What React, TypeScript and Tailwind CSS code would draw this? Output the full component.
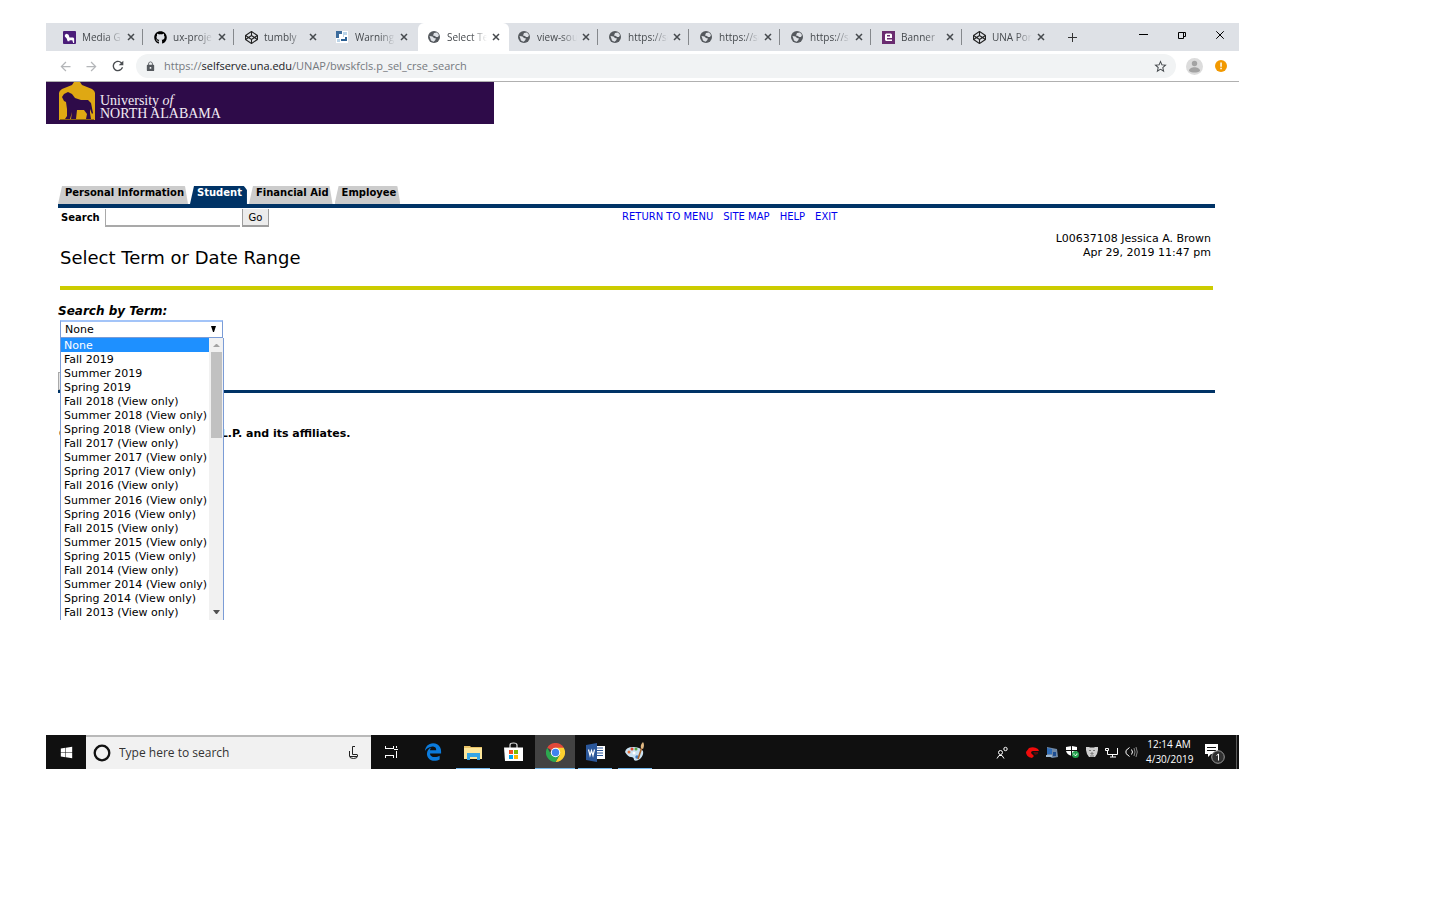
import React, { useState } from 'react';
import { FaGithub, FaGlobeAmericas, FaCodepen, FaEdgeLegacy, FaWindows } from 'react-icons/fa';
import { MdArrowBack, MdArrowForward, MdRefresh, MdLock, MdStarBorder } from 'react-icons/md';

const UI = "font-['Open_Sans','Noto_Sans',sans-serif]";
const VERDANA = "font-['DejaVu_Sans',sans-serif]";

const LION =
  'M3 15L5 12 9 10 13 12 16 16 22 18 29 18 32 21 34 31 33 32 31 27V31L32 37H27L28 32 25 28 18 28 17 37H12L13 30 11 37H6L8 34V27L7 20 5 19z';

function LionMark({ className }: { className: string }) {
  return (
    <svg className={className} viewBox="0 0 14 14" aria-hidden="true">
      <rect width="14" height="14" rx="1" fill="#4b1d79" />
      <path d="M2 4l2-1 2 1 1 3h4l1 1v5h-1l-1-3H7v1H5L4 8 2 6z" fill="#fff" />
    </svg>
  );
}

function TilesMark() {
  return (
    <svg className="size-3" viewBox="0 0 12 12" aria-hidden="true">
      <rect width="12" height="12" fill="#fff" />
      <path d="M0 0h6v3H3v4H0z" fill="#3b6b9c" />
      <path d="M7 1h4v3H8v2H7zM1 8h3v3H1z" fill="#b9d3e8" />
      <path d="M5 8h4v2H5zM9 6h2v4H9z" fill="#2a5f93" />
    </svg>
  );
}

function BannerMark() {
  return (
    <svg className="size-[13px]" viewBox="0 0 13 13" aria-hidden="true">
      <rect width="13" height="13" fill="#6a2c70" />
      <path d="M4 2.500h5l1 1V7H5v1.500h5V10H4L3 9V3.500z" fill="#fff" />
      <path d="M5 4h3v1.500H5z" fill="#6a2c70" />
    </svg>
  );
}

type Kind = 'lion' | 'github' | 'codepen' | 'tiles' | 'globe' | 'banner';
const browserTabs: { kind: Kind; title: string; line?: boolean; active?: boolean }[] = [
  { kind: 'lion', title: 'Media G', line: true },
  { kind: 'github', title: 'ux-proje', line: true },
  { kind: 'codepen', title: 'tumbly' },
  { kind: 'tiles', title: 'Warning' },
  { kind: 'globe', title: 'Select Te', active: true },
  { kind: 'globe', title: 'view-sou', line: true },
  { kind: 'globe', title: 'https://se', line: true },
  { kind: 'globe', title: 'https://se', line: true },
  { kind: 'globe', title: 'https://se', line: true },
  { kind: 'banner', title: 'Banner', line: true },
  { kind: 'codepen', title: 'UNA Por' },
];

function TabIcon({ kind }: { kind: Kind }) {
  if (kind === 'lion') return <LionMark className="size-[13px]" />;
  if (kind === 'github') return <FaGithub className="size-[13px] text-black" />;
  if (kind === 'codepen') return <FaCodepen className="size-[13px] text-[#222]" />;
  if (kind === 'tiles') return <TilesMark />;
  if (kind === 'banner') return <BannerMark />;
  return (
    <svg className="size-3" viewBox="0 0 12 12" aria-hidden="true">
      <circle cx="6" cy="6" r="6" fill="#55595e" />
      <path d="M6 2l3-.5L11 4 10 6H8L7 5 5 4.500zM1.500 5l3 .5 1.500 1.500 2 .5-1 2-1.500 1.300L3 9.500z" fill="#dee1e6" />
    </svg>
  );
}

function Cross({ className }: { className: string }) {
  return (
    <svg className={className} viewBox="0 0 8 8" fill="none" stroke="currentColor" aria-hidden="true">
      <path d="M1 1l6 6M7 1L1 7" />
    </svg>
  );
}

function BrowserChrome() {
  return (
    <div className={UI}>
      <div className="flex h-7 items-stretch bg-[#dee1e6] pl-2 text-[#45494d]">
        {browserTabs.map((t, i) => (
          <div
            key={i}
            className={
              t.active
                ? 'flex w-[91px] items-center rounded-t-md bg-white pr-[6px] pl-[10px]'
                : 'flex w-[91px] items-center py-1 pr-[2px] pl-[9px]'
            }
          >
            <span className="flex w-[19px] shrink-0 items-center">
              <TabIcon kind={t.kind} />
            </span>
            <span className="w-10 overflow-hidden text-[10px] whitespace-nowrap [mask-image:linear-gradient(to_right,#000_60%,transparent)]">
              {t.title}
            </span>
            <button type="button" aria-label="Close tab" className="ml-[5px] text-[#45494d]">
              <Cross className="size-2 stroke-[1.5]" />
            </button>
            {t.line && <span className="ml-auto h-4 w-px bg-[#85888c]" />}
          </div>
        ))}
        <button type="button" aria-label="New tab" className="ml-[13px] flex items-center">
          <svg className="size-[9px]" viewBox="0 0 9 9" stroke="#333" aria-hidden="true">
            <path d="M4.500 0v9M0 4.500h9" />
          </svg>
        </button>
        <div className="mr-[14px] ml-auto flex items-center gap-[29px] pb-1 text-black">
          <button type="button" aria-label="Minimize">
            <svg className="size-[10px]" viewBox="0 0 10 10" stroke="currentColor" aria-hidden="true">
              <path d="M1 4.500h9" />
            </svg>
          </button>
          <button type="button" aria-label="Restore">
            <svg className="size-[9px]" viewBox="0 0 9 9" fill="none" stroke="currentColor" aria-hidden="true">
              <path d="M1.500 1.500h5v6h-5zM2.500 1.500h6v4H7" />
            </svg>
          </button>
          <button type="button" aria-label="Close window">
            <Cross className="size-[10px] stroke-[0.8]" />
          </button>
        </div>
      </div>
      <div className="flex h-[31px] items-center border-b border-[#b0b0b0] bg-white pr-3 pl-3">
        <button type="button" aria-label="Back" className="w-[26px]">
          <MdArrowBack className="size-[15px] text-[#b4b6b9]" />
        </button>
        <button type="button" aria-label="Forward" className="w-[26px]">
          <MdArrowForward className="size-[15px] text-[#b4b6b9]" />
        </button>
        <button type="button" aria-label="Reload" className="w-[26px]">
          <MdRefresh className="size-[16px] text-[#4a4d51]" />
        </button>
        <div className="flex h-6 flex-1 items-center rounded-full bg-[#f1f3f4] pr-2 pl-[9px]">
          <MdLock className="size-[11px] text-[#55595e]" />
          <span className="ml-2 flex-1 text-[11px] text-[#75797e]">
            https://<span className="text-[#202124]">selfserve.una.edu</span>/UNAP/bwskfcls.p_sel_crse_search
          </span>
          <button type="button" aria-label="Bookmark">
            <MdStarBorder className="size-[15px] text-[#45494d]" />
          </button>
        </div>
        <button type="button" aria-label="Profile" className="ml-[10px]">
          <svg className="size-[17px]" viewBox="0 0 17 17" aria-hidden="true">
            <circle cx="8.500" cy="8.500" r="8.500" fill="#dcdcdc" />
            <circle cx="8.500" cy="5.500" r="2.700" fill="#a3a3a3" />
            <path d="M3 13c0-5 11-5 11 0-3 2-8 2-11 0z" fill="#a3a3a3" />
          </svg>
        </button>
        <button type="button" aria-label="Update" className="ml-3">
          <svg className="size-3" viewBox="0 0 12 12" aria-hidden="true">
            <circle cx="6" cy="6" r="6" fill="#f29900" />
            <path d="M5.300 2.500h1.500v4.300H5.300zM5.300 7.800h1.500v1.500H5.300z" fill="#fff" />
          </svg>
        </button>
      </div>
    </div>
  );
}

const sections = ['Personal Information', 'Student', 'Financial Aid', 'Employee'];

const viewOnly = ['2018', '2017', '2016', '2015', '2014'].flatMap((y) => [
  `Fall ${y} (View only)`,
  `Summer ${y} (View only)`,
  `Spring ${y} (View only)`,
]);
const terms = ['None', 'Fall 2019', 'Summer 2019', 'Spring 2019', ...viewOnly, 'Fall 2013 (View only)'];

function TermPicker() {
  const [term, setTerm] = useState('None');
  return (
    <div className="relative ml-[2px] w-[164px]">
      <select
        id="term"
        value={term}
        onChange={(e) => setTerm(e.target.value)}
        className="block h-[18px] w-[163px] appearance-none border border-t-2 border-[#7b9cd6] border-t-[#a3c4f8] bg-white pl-1 text-[11px] leading-none"
      >
        {terms.map((t) => (
          <option key={t}>{t}</option>
        ))}
      </select>
      <svg className="pointer-events-none absolute top-[6px] right-2 h-[6px] w-[5px]" viewBox="0 0 5 6" aria-hidden="true">
        <path d="M0 0h5L3 6H2z" />
      </svg>
      <div className="absolute top-[18px] left-0 z-10 flex h-[282px] w-[164px] border-x border-[#7b9cd6] bg-white">
        <ul role="listbox" aria-label="Terms" className="flex w-[148px] flex-col">
          {terms.map((t) => (
            <li
              key={t}
              role="option"
              aria-selected={t === term}
              onClick={() => setTerm(t)}
              className={
                t === term
                  ? 'flex flex-1 items-center bg-[#1e90ff] pl-[3px] text-[11px] leading-none whitespace-nowrap text-white'
                  : 'flex flex-1 items-center pl-[3px] text-[11px] leading-none whitespace-nowrap'
              }
            >
              {t}
            </li>
          ))}
        </ul>
        <div className="flex flex-1 flex-col items-center bg-[#f1f1f1]">
          <svg className="mt-[6px] h-[3px] w-[7px]" viewBox="0 0 7 3" aria-hidden="true">
            <path d="M0 3L3 0h1l3 3z" fill="#a3a3a3" />
          </svg>
          <div className="mt-[5px] h-[86px] w-[11px] bg-[#c1c1c1]" />
          <svg className="mt-auto mb-[6px] h-1 w-[7px]" viewBox="0 0 7 4" aria-hidden="true">
            <path d="M0 0h7L4 4H3z" fill="#505050" />
          </svg>
        </div>
      </div>
    </div>
  );
}

function Page() {
  return (
    <main className={`${VERDANA} min-h-[653px] text-[11px] leading-[14px] text-black`}>
      <header className="flex h-[42px] w-[448px] items-start bg-[#2e0b49] pl-[13px]">
        <svg className="h-[38px] w-9" viewBox="0 0 36 38" aria-hidden="true">
          <path d="M0 38V11q0-2 3-4l10-4 2-3h6l2 3 10 4q3 2 3 4v27z" fill="#dfa813" />
          <path d={LION} fill="#2e0b49" />
          <path d="M1 37.500h34" stroke="#8a6114" fill="none" />
        </svg>
        <p className="mt-3 ml-[5px] font-['Liberation_Serif',serif] text-[14px] leading-[13px] text-[#f2ecf5]">
          University <i>of</i>
          <br />
          NORTH ALABAMA
        </p>
      </header>

      <div className="mr-6 ml-3 pt-[62px]">
        <nav className="flex h-[22px] items-start gap-[2px] border-b-4 border-[#003366]">
          {sections.map((s) => (
            <a
              key={s}
              href="#section"
              className={
                s === 'Student'
                  ? "relative flex h-[18px] items-start pr-[5px] pl-[7px] text-[10px] font-bold text-white before:absolute before:inset-0 before:rounded-t-sm before:bg-[#003366] before:[clip-path:polygon(4px_0,calc(100%-3px)_0,100%_4px,100%_100%,0_100%)]"
                  : "relative flex h-[18px] items-start pr-[4px] pl-[7px] text-[10px] font-bold text-black before:absolute before:inset-0 before:rounded-t-sm before:bg-[#cccccc] before:[clip-path:polygon(4px_0,calc(100%-3px)_0,100%_100%,0_100%)]"
              }
            >
              <span className="relative leading-[13px]">{s}</span>
            </a>
          ))}
        </nav>

        <div className="flex h-5 items-start pl-[3px]">
          <form className="flex w-[561px] items-center pt-px" onSubmit={(e) => e.preventDefault()}>
            <label htmlFor="search" className="w-11 text-[10px] font-bold">
              Search
            </label>
            <input id="search" className="h-[18px] w-[135px] border-b-2 border-l border-[#a9a9a9] px-1 outline-none" />
            <button
              type="submit"
              className="ml-[2px] h-[18px] w-[27px] border-r border-b-2 border-l border-[#9d9d9d] bg-[#ececec] pt-[2px] text-[10px] leading-none"
            >
              Go
            </button>
          </form>
          <div className="flex gap-[10px] pt-[2px] text-[10px] text-[#0000ee]">
            <a href="#menu">RETURN TO MENU</a>
            <a href="#map">SITE MAP</a>
            <a href="#help">HELP</a>
            <a href="#exit">EXIT</a>
          </div>
        </div>

        <div className="mr-[2px] ml-[2px] flex h-[62px] items-start justify-between border-b-4 border-[#cccc00]">
          <h1 className="pt-[18px] text-[18px] leading-6">Select Term or Date Range</h1>
          <p className="mr-[2px] pt-1 text-right">
            L00637108 Jessica A. Brown
            <br />
            Apr 29, 2019 11:47 pm
          </p>
        </div>

        <label htmlFor="term" className="mt-[14px] mb-[2px] block text-[12px] font-bold italic">
          Search by Term:
        </label>
        <TermPicker />
        <button type="button" className="mt-[34px] block h-[18px] w-12 border border-[#a9a9a9] bg-[#e4e4e4] text-[10px] leading-none">
          Submit
        </button>
        <footer className="border-t-[3px] border-[#003366] pt-[34px] text-[11px] font-bold">
          © 2019 Ellucian Company L.P. and its affiliates.
        </footer>
      </div>
    </main>
  );
}

function TaskApp({ label, running, active, children }: { label: string; running?: boolean; active?: boolean; children: React.ReactNode }) {
  return (
    <button
      type="button"
      aria-label={label}
      className={active ? 'relative flex w-10 items-center justify-center bg-[#434343]' : 'relative flex w-10 items-center justify-center'}
    >
      {children}
      {running && <span className={active ? 'absolute inset-x-0 bottom-0 h-px bg-[#76b9ed]' : 'absolute inset-x-[3px] bottom-0 h-px bg-[#76b9ed]'} />}
    </button>
  );
}

function Taskbar() {
  return (
    <footer className={`${UI} flex h-[34px] items-stretch bg-[#101010] text-white`}>
      <button type="button" aria-label="Start" className="flex w-10 items-center justify-center">
        <FaWindows className="size-[13px]" />
      </button>
      <div className="flex w-[285px] items-center border-t-2 border-[#b9b9b9] bg-[#f1f1f1] pr-3 pl-[7px]">
        <svg className="size-[18px]" viewBox="0 0 18 18" aria-hidden="true">
          <circle cx="9" cy="9" r="7.300" fill="none" stroke="#111" strokeWidth="2.300" />
        </svg>
        <input
          aria-label="Type here to search"
          placeholder="Type here to search"
          className="ml-2 min-w-0 flex-1 bg-transparent text-[12px] outline-none placeholder:text-[#333]"
        />
        <svg className="h-[14px] w-[11px]" viewBox="0 0 11 14" fill="none" stroke="#222" aria-hidden="true">
          <path d="M7 .5H4.500v8H9M1.500 5v5q0 2.500 4 2.500t4-2.500V8.500M2 10.500h7" />
        </svg>
      </div>
      <TaskApp label="Task view">
        <svg className="h-3 w-[13px]" viewBox="0 0 13 12" fill="none" stroke="#fff" aria-hidden="true">
          <path d="M.5 0v2.500h8V0M.5 12V9.500h8V12M0 2.500h9M0 9.500h9M11.500 0v2M11.500 5v7M9 3.500h4" />
        </svg>
      </TaskApp>
      <div className="ml-[2px] flex">
        <TaskApp label="Edge">
          <FaEdgeLegacy className="size-[18px] text-[#0b7bdc]" />
        </TaskApp>
      </div>
      <TaskApp label="File Explorer" running>
        <svg className="h-[15px] w-[19px]" viewBox="0 0 19 15" aria-hidden="true">
          <path d="M0 1h6l1 1h11v12H0z" fill="#e8c266" />
          <path d="M0 3h18v11H0z" fill="#fde69a" />
          <path d="M3 8h13v7h-3v-3H6v3H3z" fill="#35a5e5" />
        </svg>
      </TaskApp>
      <TaskApp label="Store">
        <svg className="h-5 w-[19px]" viewBox="0 0 19 20" aria-hidden="true">
          <path d="M6 6V3q0-2 3.500-2T13 3v3" fill="none" stroke="#ddd" strokeWidth="1.200" />
          <path d="M0 5.500h19V19H1z" fill="#fff" />
          <path d="M5 8h4v4H5z" fill="#f25022" />
          <path d="M10 8h4v4h-4z" fill="#7fba00" />
          <path d="M5 13h4v4H5z" fill="#00a4ef" />
          <path d="M10 13h4v4h-4z" fill="#ffb900" />
        </svg>
      </TaskApp>
      <div className="ml-[2px] flex">
        <TaskApp label="Chrome" running active>
          <svg className="size-[19px]" viewBox="0 0 20 20" aria-hidden="true">
            <path d="M10 10L1.300 5A10 10 0 0 1 18.700 5z" fill="#e0483a" />
            <path d="M10 10V5h8.700A10 10 0 0 1 10 20l4.300-7.500z" fill="#fdd02f" />
            <path d="M10 10l4.300 2.500L10 20A10 10 0 0 1 1.300 5l4.400 7.500z" fill="#2da94f" />
            <circle cx="10" cy="10" r="5" fill="#fff" />
            <circle cx="10" cy="10" r="3.900" fill="#3f83ee" />
          </svg>
        </TaskApp>
      </div>
      <TaskApp label="Word" running>
        <svg className="size-[19px]" viewBox="0 0 19 19" aria-hidden="true">
          <path d="M9 3h10v13H9z" fill="#fff" />
          <path d="M11 5h6M11 7.500h6M11 10h6M11 12.500h6" stroke="#2b579a" />
          <path d="M0 2l11-2v19L0 17z" fill="#2b579a" />
          <path d="M2.500 6.500L4 12.500l1.500-5 1.500 5 1.500-6" stroke="#fff" strokeWidth="1.200" fill="none" />
        </svg>
      </TaskApp>
      <TaskApp label="Paint" running>
        <svg className="size-5" viewBox="0 0 20 20" aria-hidden="true">
          <path d="M0 10q1-5 8-5t10 4q1 4-3 8-4 3-6 1 0-3-3-3t-6-5z" fill="#c9e2f2" />
          <circle cx="4" cy="10" r="1.500" fill="#e2703b" />
          <circle cx="7" cy="7" r="1.500" fill="#d8452f" />
          <circle cx="11" cy="7" r="1.500" fill="#58a745" />
          <circle cx="9" cy="11" r="1.500" fill="#ffffff" />
          <circle cx="12" cy="15" r="1.700" fill="#3d7fc7" />
          <path d="M17 5l-4 12" stroke="#a8642c" strokeWidth="1.600" />
          <path d="M16 6q-1-3 2-6 2 3 0 7z" fill="#e0b883" />
        </svg>
      </TaskApp>

      <div className="ml-auto flex items-center">
        <svg className="mr-[17px] size-[13px]" viewBox="0 0 13 13" fill="none" stroke="#fff" aria-hidden="true">
          <circle cx="9.500" cy="3" r="1.700" />
          <circle cx="4.500" cy="6.500" r="2" />
          <path d="M1 12.500l2-3h3l2 3" />
        </svg>
        <svg className="mr-[7px] h-[11px] w-[13px]" viewBox="0 0 13 11" aria-hidden="true">
          <path d="M3 1q5-2 9 1l1 2H7Q5 4 5 6l3 3-2 2Q0 10 0 5z" fill="#f00b0b" />
          <path d="M7 5h5v2l-3 1z" fill="#5c0a0a" />
        </svg>
        <svg className="mr-[7px] size-[13px]" viewBox="0 0 13 13" aria-hidden="true">
          <path d="M1 1l10 2 1 8-6 1-5-3z" fill="#6f88a6" />
          <path d="M1 2l5 1v5H1z" fill="#2f6db8" />
          <path d="M7 6h3v4H7z" fill="#1d4d92" />
          <path d="M0 9h6v2H0z" fill="#9eb9d2" />
        </svg>
        <svg className="mr-[7px] h-[14px] w-[13px]" viewBox="0 0 13 14" aria-hidden="true">
          <path d="M0 2l6-1 5 1v5q-1 4-5 4-5-1-6-5z" fill="#fff" />
          <path d="M5.500 0v11M0 5.500h11" stroke="#111" />
          <circle cx="9.500" cy="9.500" r="3.500" fill="#1fa04b" />
          <path d="M8 8.500v1l1.200 1.200L11 9.500v-1" stroke="#fff" fill="none" />
        </svg>
        <svg className="mr-[7px] size-3" viewBox="0 0 12 12" aria-hidden="true">
          <path d="M0 1h3l1 .5h4L9 1h3v3l-1 4-2 3H3L1 8 0 4z" fill="#cfcfcf" />
          <path d="M3 4.500h2M7 4.500h2M5 7h2v1H5zM4 10h4" stroke="#777" fill="none" />
        </svg>
        <svg className="mr-[6px] h-[11px] w-[14px]" viewBox="0 0 14 11" fill="none" stroke="#fff" aria-hidden="true">
          <path d="M.5 1.500h3v2h-3zM2.500 4v3.500h10V1M7.500 8v2M5 10h6" />
        </svg>
        <svg className="mr-2 h-3 w-[13px]" viewBox="0 0 13 12" fill="none" stroke="#fff" aria-hidden="true">
          <path d="M4.500 1.500L1 4.500v3l3.500 3" />
          <path d="M6.500 3.500q2 2.500 0 5" />
          <path d="M9 2q2 4 0 8M11 1q2.500 5 0 10" stroke="#888" />
        </svg>
        <time className="w-[46px] text-center text-[10px] leading-[15px] whitespace-nowrap">
          12:14 AM
          <br />
          4/30/2019
        </time>
        <svg className="mt-[3px] mr-[11px] ml-[13px] size-5 shrink-0" viewBox="0 0 20 20" aria-hidden="true">
          <path d="M0 0h13v10H6l-3 3v-3H0z" fill="#fff" />
          <path d="M2 3.500h9M2 6.500h9" stroke="#111" />
          <circle cx="13" cy="13" r="6.300" fill="#303030" stroke="#999" />
          <path d="M11.500 11.500L13.500 10v6.500" stroke="#fff" fill="none" />
        </svg>
        <span className="mr-[2px] h-[34px] w-px bg-[#5a5a5a]" />
      </div>
    </footer>
  );
}

export default function App() {
  return (
    <div className="min-h-screen bg-white pt-[23px] pr-[201px] pl-[46px]">
      <BrowserChrome />
      <Page />
      <Taskbar />
    </div>
  );
}
